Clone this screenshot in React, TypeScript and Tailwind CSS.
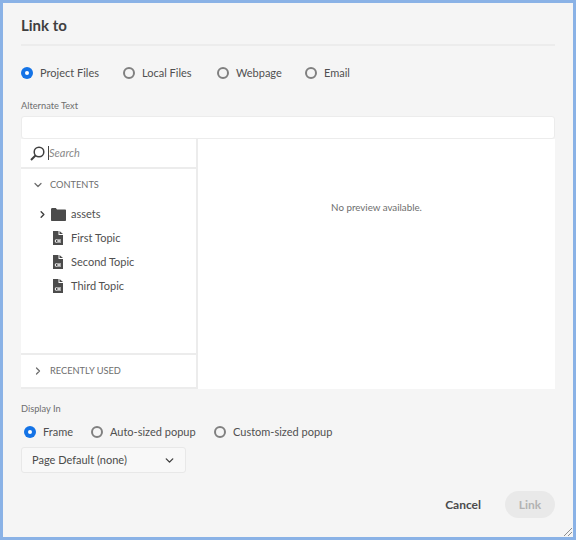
import React from 'react';
import { ChevronDown, ChevronRight } from 'lucide-react';

const font = "font-['Lato','Liberation_Sans',sans-serif]";

function Radio({ label, checked, className }: { label: string; checked?: boolean; className?: string }) {
  return (
    <div className={`flex items-center gap-[7px] ${className ?? ''}`}>
      {checked ? (
        <span className="w-3 h-3 rounded-full bg-[#1473e6] flex items-center justify-center">
          <span className="w-1 h-1 rounded-full bg-white" />
        </span>
      ) : (
        <span className="w-3 h-3 rounded-full border-2 border-[#808080]" />
      )}
      <span className="text-[11px] leading-4 text-[#505050]">{label}</span>
    </div>
  );
}

function TopicIcon() {
  return (
    <svg width="10" height="14" viewBox="0 0 10 14" className="shrink-0">
      <path d="M0 0h5.500v4H10v10H0z" fill="#4b4b4b" />
      <path d="M6.500 0L10 3H6.500z" fill="#4b4b4b" />
      <path d="M3.500 8L2 10l1.500 2M5 8v4M7 8v4M5 10h2" stroke="#fff" strokeWidth="1" fill="none" />
    </svg>
  );
}

function FolderIcon() {
  return (
    <svg width="15" height="13" viewBox="0 0 15 13" className="shrink-0">
      <path d="M0 1.500C0 .7.500 0 1.200 0h3.600l1.200 1.500h8c.6 0 1 .4 1 1V12c0 .6-.4 1-1 1H1c-.6 0-1-.4-1-1z" fill="#4b4b4b" />
    </svg>
  );
}

function TopicRow({ label }: { label: string }) {
  return (
    <div className="h-6 flex items-center pl-[32px] gap-[8px]">
      <TopicIcon />
      <span className="text-[11px] text-[#505050]">{label}</span>
    </div>
  );
}

export default function App() {
  return (
    <div className={`w-[576px] h-[540px] bg-[#8ab2e6] p-[3px] ${font}`}>
      <div className="relative h-full bg-[#f5f5f5] pl-[18px] pr-[18px] flex flex-col">
        <h1 className="pt-[14px] text-[15px] leading-[17px] font-bold text-[#3f3f3f] h-8">Link to</h1>
        <div className="mt-[9px] h-[2px] bg-[#ececec]" />

        <div className="mt-[19px] h-4 flex items-center">
          <Radio label="Project Files" checked className="w-[102px]" />
          <Radio label="Local Files" className="w-[94px]" />
          <Radio label="Webpage" className="w-[88px]" />
          <Radio label="Email" />
        </div>

        <div className="mt-[18px] text-[9.25px] leading-[14px] text-[#6e6e6e]">Alternate Text</div>
        <div className="mt-[3px] h-[23px] bg-white border border-[#ececec] rounded-[3px]" />

        <div className="h-[250px] flex bg-white">
          <div className="w-[175px] flex flex-col border-r-2 border-[#ececec] shrink-0 box-content">
            <div className="h-[28px] flex items-center pl-[9px] border-b-2 border-[#ececec] box-content">
              <svg width="15" height="15" viewBox="0 0 15 15" className="shrink-0">
                <circle cx="9" cy="6" r="4.800" stroke="#3f3f3f" strokeWidth="1.500" fill="none" />
                <path d="M5.500 9.500L1 14" stroke="#3f3f3f" strokeWidth="2" />
              </svg>
              <span className="ml-[3px] w-px h-[14px] bg-[#444]" />
              <span className="text-[11px] italic text-[#8a8a8a]">Search</span>
            </div>

            <div className="flex-1">
              <div className="mt-[8px] h-4 flex items-center pl-[11px] gap-[6px]">
                <ChevronDown size={12} strokeWidth={2.5} className="text-[#6e6e6e]" />
                <span className="text-[9.25px] text-[#6e6e6e]">CONTENTS</span>
              </div>
              <div className="mt-[9px]">
                <div className="h-6 flex items-center pl-[16px]">
                  <ChevronRight size={11} strokeWidth={3} className="text-[#3f3f3f]" />
                  <span className="ml-[3px]"><FolderIcon /></span>
                  <span className="ml-[5px] text-[11px] text-[#505050]">assets</span>
                </div>
                <TopicRow label="First Topic" />
                <TopicRow label="Second Topic" />
                <TopicRow label="Third Topic" />
              </div>
            </div>

            <div className="h-[36px] flex items-center pl-[11px] gap-[6px] border-t-2 border-[#ececec] border-b-2">
              <ChevronRight size={12} strokeWidth={2.5} className="text-[#6e6e6e]" />
              <span className="text-[9.25px] text-[#6e6e6e]">RECENTLY USED</span>
            </div>
          </div>
          <div className="flex-1 pt-[62px] text-center text-[9.75px] leading-3 text-[#6e6e6e]">
            No preview available.
          </div>
        </div>

        <div className="mt-[13px] text-[9.25px] leading-[14px] text-[#6e6e6e]">Display In</div>
        <div className="mt-[8px] h-4 flex items-center pl-[3px]">
          <Radio label="Frame" checked className="w-[67px]" />
          <Radio label="Auto-sized popup" className="w-[123px]" />
          <Radio label="Custom-sized popup" />
        </div>

        <div className="mt-[7px] w-[165px] h-[26px] bg-[#f8f8f8] border border-[#e8e8e8] rounded-[3px] flex items-center justify-between pl-[10px] pr-[9px]">
          <span className="text-[11px] text-[#4b4b4b]">Page Default (none)</span>
          <ChevronDown size={13} strokeWidth={2.500} className="text-[#3f3f3f]" />
        </div>

        <div className="mt-[18px] flex items-center justify-end">
          <span className="text-[12px] font-bold text-[#4b4b4b]">Cancel</span>
          <button className="ml-[24px] w-[50px] h-[27px] rounded-full bg-[#e9e9e9] text-[12px] font-bold text-[#b3b3b3]">
            Link
          </button>
        </div>

        <svg width="10" height="10" viewBox="0 0 10 10" className="absolute right-0 bottom-0">
          <path d="M1 9l8-8M5 9l4-4" stroke="#8e8e8e" strokeWidth="1" />
        </svg>
      </div>
    </div>
  );
}
